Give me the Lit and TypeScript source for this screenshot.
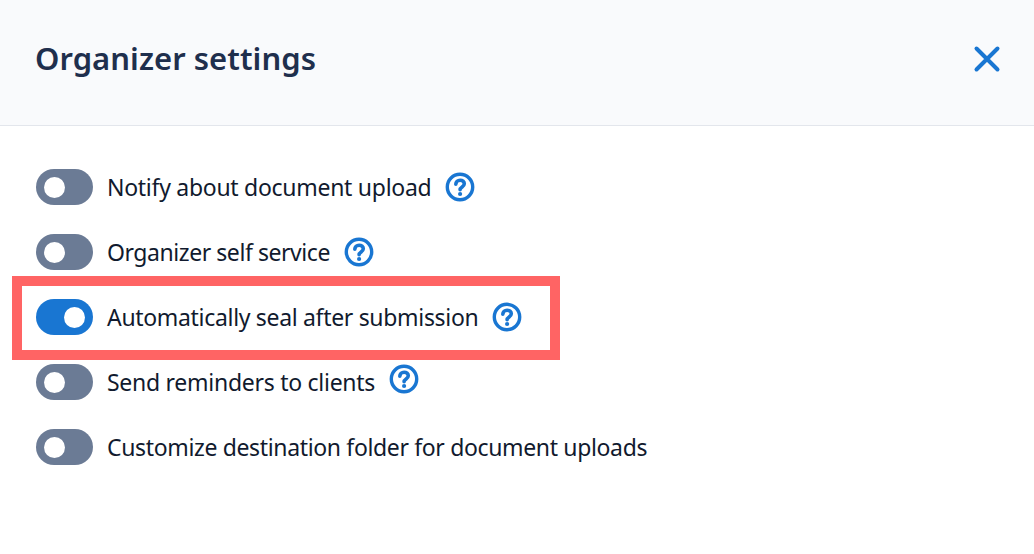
import { LitElement, html, css } from "lit";
import { customElement } from "lit/decorators.js";

const rows = [
  { label: "Notify about document upload", on: false, help: true, track: -0.28 },
  { label: "Organizer self service", on: false, help: true, track: -0.44 },
  { label: "Automatically seal after submission", on: true, help: true, track: -0.32 },
  { label: "Send reminders to clients", on: false, help: true, raised: true, track: -0.27 },
  { label: "Customize destination folder for document uploads", on: false, help: false, track: -0.35 },
];

const help = html`<svg class="help" viewBox="0 0 30 30" fill="none" aria-hidden="true">
  <circle cx="15" cy="15" r="12.7" stroke="currentColor" stroke-width="3.4"></circle>
  <path d="M10.8 12.2c0-2.5 1.900-4 4.300-4s4.200 1.500 4.200 3.600c0 3.100-4.200 3.100-4.200 5.900" stroke="currentColor" stroke-width="3.6" stroke-linecap="round"></path>
  <circle cx="15.1" cy="22" r="2.1" fill="currentColor"></circle>
</svg>`;

@customElement("app-root")
export class AppRoot extends LitElement {
  static styles = css`
    :host { display: block; position: relative; width: 1034px; height: 554px; background: #fff; overflow: hidden; font-family: "Noto Sans", "Open Sans", sans-serif; }
    .head { height: 125px; background: #f9fafc; border-bottom: 1px solid #e3e6ec; display: flex; align-items: center; justify-content: space-between; padding: 0 32px 0 36px; }
    h1 { margin: 0; font-size: 31px; font-weight: 600; color: #1f2f4d; letter-spacing: 0.05px; line-height: 40px; position: relative; top: -5px; left: -1px; }
    .close { width: 30px; height: 30px; color: #1976d2; display: block; position: relative; top: -4px; left: -0.5px; }
    .list { display: flex; flex-direction: column; padding: 43px 0 0 36px; }
    .row { display: flex; align-items: center; height: 36px; margin-bottom: 29px; }
    .toggle { width: 57px; height: 36px; border-radius: 18px; background: #6b7b95; flex: none; display: flex; align-items: center; padding: 0 8px; box-sizing: border-box; }
    .toggle.on { background: #1976d2; justify-content: flex-end; }
    .knob { width: 21px; height: 21px; border-radius: 50%; background: #fff; }
    .label { margin-left: 14px; font-size: 23px; color: #111a2e; line-height: 36px; white-space: nowrap; }
    .help { width: 30px; height: 30px; color: #1976d2; margin-left: 14px; flex: none; }
    .raised .help { position: relative; top: -3px; }
    .mark { position: absolute; left: 12px; top: 276px; width: 548px; height: 84px; box-sizing: border-box; border: 10px solid #ff6464; pointer-events: none; }
  `;

  render() {
    return html`
      <div class="head">
        <h1>Organizer settings</h1>
        <svg class="close" viewBox="0 0 30 30" fill="none" aria-hidden="true"><path d="M4.500 4.500l21 21M25.500 4.500l-21 21" stroke="currentColor" stroke-width="4" stroke-linecap="round"></path></svg>
      </div>
      <div class="list">
        ${rows.map((r) => html`<div class="row ${r.raised ? "raised" : ""}">
          <span class="toggle ${r.on ? "on" : ""}"><span class="knob"></span></span>
          <span class="label" style="letter-spacing:${r.track}px">${r.label}</span>
          ${r.help ? help : ""}
        </div>`)}
      </div>
      <div class="mark"></div>
    `;
  }
}
